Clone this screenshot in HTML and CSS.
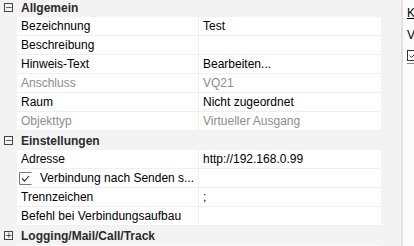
FILE: index.html
```html
<!DOCTYPE html>
<html lang="de">
<head>
  <meta charset="UTF-8" />
  <title>Eigenschaften</title>
  <link rel="stylesheet" href="styles.css">
</head>
<body>
  <div class="window">
    <div class="grid">
      <div class="category first">
        <span class="toggle">&minus;</span>
        <span class="cat-title">Allgemein</span>
      </div>
      <div class="row"><div class="name">Bezeichnung</div><div class="value">Test</div></div>
      <div class="row"><div class="name">Beschreibung</div><div class="value"></div></div>
      <div class="row"><div class="name">Hinweis-Text</div><div class="value">Bearbeiten...</div></div>
      <div class="row disabled"><div class="name">Anschluss</div><div class="value">VQ21</div></div>
      <div class="row"><div class="name">Raum</div><div class="value">Nicht zugeordnet</div></div>
      <div class="row disabled"><div class="name">Objekttyp</div><div class="value">Virtueller Ausgang</div></div>

      <div class="category">
        <span class="toggle">&minus;</span>
        <span class="cat-title">Einstellungen</span>
      </div>
      <div class="row"><div class="name">Adresse</div><div class="value">http://192.168.0.99</div></div>
      <div class="row">
        <div class="name check-name">
          <svg class="check" width="13" height="13" viewBox="0 0 13 13">
            <path d="M0.5 12.5 V0.5 H12.5" fill="none" stroke="#7a7a7a" />
            <path d="M0.5 12.5 H12.5" fill="none" stroke="#7a7a7a" />
            <path d="M3 6.5 L5.5 9 L10 4" fill="none" stroke="#222" stroke-width="1.1" />
          </svg>
          <span>Verbindung nach Senden s...</span>
        </div>
        <div class="value"></div>
      </div>
      <div class="row"><div class="name">Trennzeichen</div><div class="value">;</div></div>
      <div class="row"><div class="name">Befehl bei Verbindungsaufbau</div><div class="value"></div></div>

      <div class="category">
        <span class="toggle">+</span>
        <span class="cat-title">Logging/Mail/Call/Track</span>
      </div>
      <div class="row"><div class="name"></div><div class="value"></div></div>
    </div>

    <div class="side">
      <div class="side-link">K</div>
      <div class="side-text">V</div>
      <div class="side-check">
        <svg width="11" height="11" viewBox="0 0 11 11">
          <rect x="0.5" y="0.5" width="10" height="10" fill="#fff" stroke="#333" />
          <path d="M2.5 5.5 L4.5 7.5 L8.5 3.5" fill="none" stroke="#333" stroke-width="1" />
        </svg>
      </div>
    </div>
  </div>
</body>
</html>
```

FILE: styles.css
```css
body {
  margin: 0;
  padding: 0;
  font-family: "Segoe UI", "Liberation Sans", Arial, sans-serif;
  font-size: 12px;
  color: #000;
  background: #f3f3f3;
  overflow: hidden;
}
.window {
  display: flex;
  height: 246px;
}
.grid {
  width: 401px;
  background: #f3f3f3;
  border-right: 2px solid #e2e2e2;
  overflow: hidden;
}
.category {
  height: 19px;
  display: flex;
  align-items: center;
}
.category.first {
  margin-top: -2px;
}
.toggle {
  box-sizing: border-box;
  width: 9px;
  height: 9px;
  margin-left: 4px;
  margin-right: 8px;
  border: 1px solid #444;
  font-size: 9px;
  line-height: 6px;
  text-align: center;
  color: #333;
  font-family: "DejaVu Sans", sans-serif;
}
.cat-title {
  font-weight: bold;
  color: #2b2b2b;
}
.row {
  display: flex;
  margin-left: 17px;
  width: 364px;
  height: 18px;
  background: #fff;
  border-bottom: 1px solid #efefef;
}
.name {
  box-sizing: border-box;
  width: 182px;
  padding-left: 4px;
  line-height: 18px;
  border-right: 1px solid #efefef;
  white-space: nowrap;
  overflow: hidden;
}
.value {
  flex: 1;
  padding-left: 4px;
  line-height: 18px;
  white-space: nowrap;
}
.disabled .name,
.disabled .value {
  color: #8d8d8d;
}
.check-name {
  display: flex;
  align-items: center;
  padding-left: 2px;
}
.check {
  margin-right: 8px;
}
.side {
  flex: 1;
  background: #fbfbfb;
  padding-left: 4px;
  overflow: hidden;
  white-space: nowrap;
}
.side-link {
  margin-top: 5px;
  text-decoration: underline;
  line-height: 16px;
}
.side-text {
  margin-top: 6px;
  line-height: 16px;
}
.side-check {
  margin-top: 7px;
  padding-bottom: 1px;
  border-bottom: 1px solid #8a8a8a;
  height: 12px;
}
```
